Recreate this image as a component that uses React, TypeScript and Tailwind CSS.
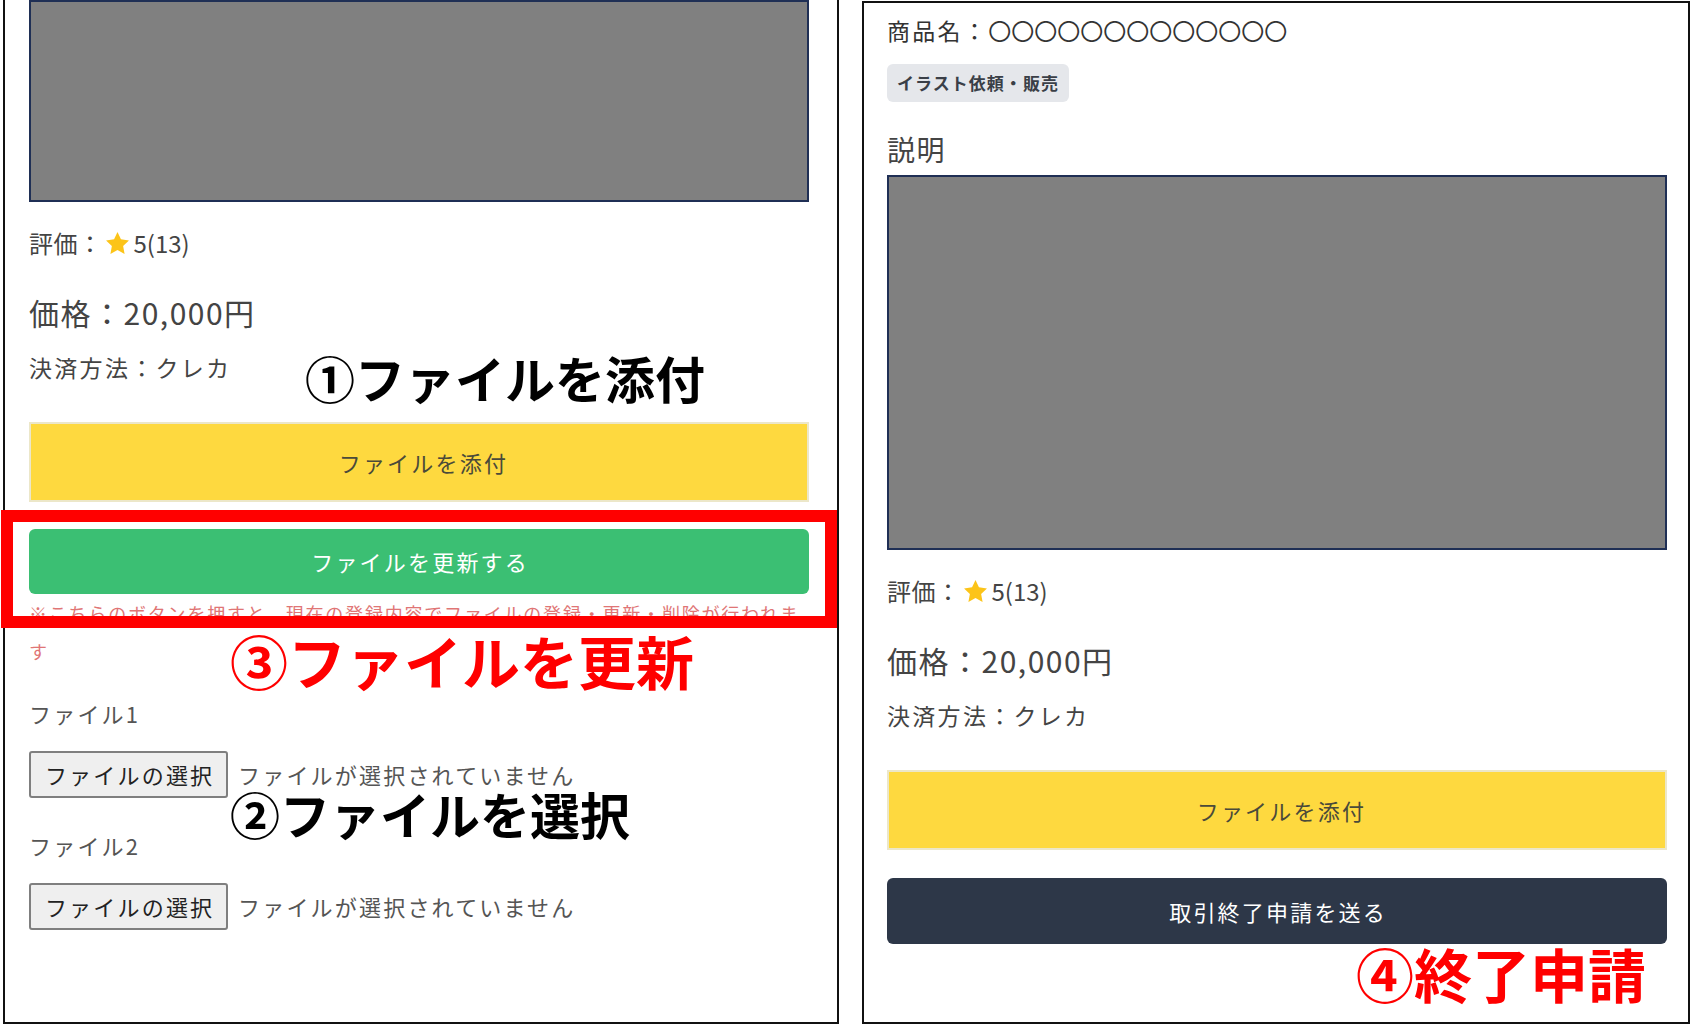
import React from "react";

const font = { fontFamily: '"Noto Sans CJK JP", "Noto Sans", sans-serif' };

function Star() {
	return (
		<svg viewBox="0 0 24 24" className="mx-[3px] h-[25px] w-[25px]">
			<path
				d="M12 1l3.3 7 7.7 1-5.6 5.3 1.4 7.7L12 18.3l-6.8 3.7 1.4-7.7L1 9l7.7-1z"
				fill="#fcc419"
			/>
		</svg>
	);
}

function FileRow({ label, top }: { label: string; top: string }) {
	return (
		<>
			<div className={`${top} text-[22px] leading-[32px] tracking-[0.1em] text-[#555]`}>
				{label}
			</div>
			<div className="mt-[22px] flex items-center">
				<span className="flex h-[47px] w-[199px] items-center justify-center rounded-[3px] border-2 border-[#7f7f7f] bg-[#efefef] pl-[0.1em] text-[22px] tracking-[0.1em] text-[#222]">
					ファイルの選択
				</span>
				<span className="ml-[10px] text-[22px] tracking-[0.1em] text-[#555]">
					ファイルが選択されていません
				</span>
			</div>
		</>
	);
}

function Details() {
	return (
		<>
			<div className="mt-[25px] flex items-center text-[24px] leading-[32px] text-[#444]">
				<span className="tracking-[0.02em]">評価：</span>
				<Star />
				<span>5(13)</span>
			</div>
			<div className="mt-[33px] text-[30px] leading-[40px] tracking-[0.05em] text-[#444]">
				価格：20,000円
			</div>
			<div className="mt-[19px] text-[23px] leading-[32px] tracking-[0.1em] text-[#444]">
				決済方法：クレカ
			</div>
			<button className="mt-[39px] flex h-[80px] w-full items-center justify-center border-2 border-[#ece7c9] bg-[#fed93f] pl-[0.4em] text-[22px] tracking-[0.1em] text-[#4a4a3a]">
				ファイルを添付
			</button>
		</>
	);
}

export default function App() {
	return (
		<div className="relative flex h-[1031px] w-[1690px] overflow-hidden bg-white" style={font}>
			{/* left panel: scrolled view */}
			<div className="ml-[3px] flex h-[1024px] w-[836px] flex-col border-x-2 border-b-2 border-[#111] pl-[24px] pr-[28px]">
				<div className="h-[202px] w-full border-2 border-[#1f2f55] bg-[#808080]" />
				<Details />
				<button className="mt-[27px] flex h-[65px] w-full items-center justify-center rounded-[6px] bg-[#3bbf73] pl-[0.1em] text-[22px] tracking-[0.1em] text-white">
					ファイルを更新する
				</button>
				<p className="text-[18px] leading-[38px] tracking-[0.1em] text-[#e07575]">
					※こちらのボタンを押すと、現在の登録内容でファイルの登録・更新・削除が行われます
				</p>
				<div className="-mt-[2px]">
					<FileRow label="ファイル1" top="mt-[29px]" />
					<FileRow label="ファイル2" top="mt-[31px]" />
				</div>
			</div>

			{/* right panel */}
			<div className="ml-[23px] mt-[1px] flex h-[1023px] w-[828px] flex-col border-2 border-[#111] pl-[23px] pr-[21px] pt-[11px]">
				<div className="text-[23px] leading-[32px] text-[#333]">
					<span className="tracking-[0.1em]">商品名：</span>
					<span>〇〇〇〇〇〇〇〇〇〇〇〇〇</span>
				</div>
				<span className="mt-[18px] flex h-[38px] w-[182px] items-center justify-center rounded-[6px] bg-[#e5e7eb] text-[17px] font-bold tracking-[0.06em] text-[#3a3f47]">
					イラスト依頼・販売
				</span>
				<div className="mt-[27px] text-[28px] leading-[40px] tracking-[0.05em] text-[#444]">説明</div>
				<div className="mt-[6px] h-[375px] w-full border-2 border-[#1f2f55] bg-[#808080]" />
				<Details />
				<button className="mt-[28px] flex h-[66px] w-full items-center justify-center rounded-[6px] bg-[#2d3748] pl-[0.1em] text-[22px] tracking-[0.1em] text-white">
					取引終了申請を送る
				</button>
			</div>

			{/* annotations */}
			<div className="pointer-events-none absolute left-[1px] top-[510px] h-[118px] w-[836px] border-[12px] border-[#ff0000]" />
			<div className="absolute left-[305px] top-[352px] text-[50px] font-bold leading-none text-black">
				①ファイルを添付
			</div>
			<div className="absolute left-[230px] top-[788px] text-[50px] font-bold leading-none text-black">
				②ファイルを選択
			</div>
			<div className="absolute left-[230px] top-[631px] text-[58px] font-bold leading-none text-[#ff0000]">
				③ファイルを更新
			</div>
			<div className="absolute left-[1356px] top-[944px] text-[58px] font-bold leading-none text-[#ff0000]">
				④終了申請
			</div>
		</div>
	);
}
